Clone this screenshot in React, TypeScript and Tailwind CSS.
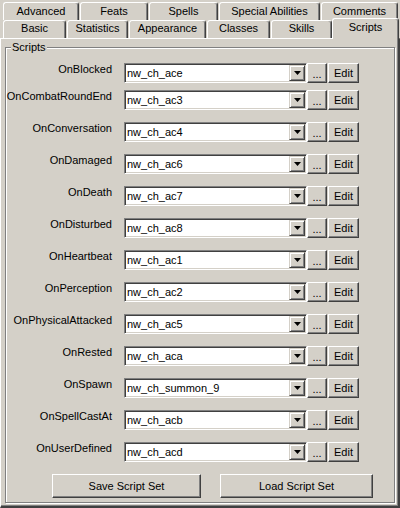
import React from "react";

const tab =
  "flex items-center justify-center border-l border-t border-r border-l-white border-t-white border-r-[#404040] shadow-[inset_-1px_0_0_#808080] rounded-t-[3px] text-[11px] text-black bg-[#d4d0c8] whitespace-nowrap";

const rows = [
  ["OnBlocked", "nw_ch_ace"],
  ["OnCombatRoundEnd", "nw_ch_ac3"],
  ["OnConversation", "nw_ch_ac4"],
  ["OnDamaged", "nw_ch_ac6"],
  ["OnDeath", "nw_ch_ac7"],
  ["OnDisturbed", "nw_ch_ac8"],
  ["OnHeartbeat", "nw_ch_ac1"],
  ["OnPerception", "nw_ch_ac2"],
  ["OnPhysicalAttacked", "nw_ch_ac5"],
  ["OnRested", "nw_ch_aca"],
  ["OnSpawn", "nw_ch_summon_9"],
  ["OnSpellCastAt", "nw_ch_acb"],
  ["OnUserDefined", "nw_ch_acd"],
];

const raised =
  "border border-t-white border-l-white border-b-[#404040] border-r-[#404040] shadow-[inset_-1px_-1px_0_#808080] bg-[#d4d0c8] flex items-center justify-center text-[11px] text-black";

function Row({ label, value, idx }: { label: string; value: string; idx: number }) {
  const mt = idx === 0 ? "mt-0" : idx === 1 ? "mt-[7px]" : "mt-[12px]";
  return (
    <div className={`flex items-start h-[20px] ${mt}`}>
      <div className="w-[106px] flex justify-end whitespace-nowrap text-[11px] leading-[13px] text-black">
        <span className="shrink-0">{label}</span>
      </div>
      <div className="ml-[12px] flex h-[20px] w-[183px] border border-t-[#808080] border-l-[#808080] border-b-white border-r-white shadow-[inset_1px_1px_0_#404040,inset_-1px_-1px_0_#d4d0c8] bg-white p-[1px]">
        <div className="flex-1 flex items-center pl-[1px] text-[11px] text-black whitespace-nowrap">
          {value}
        </div>
        <div className="w-[16px] h-[16px] bg-[#d4d0c8] border border-t-[#d4d0c8] border-l-[#d4d0c8] border-b-[#404040] border-r-[#404040] shadow-[inset_1px_1px_0_white,inset_-1px_-1px_0_#808080] flex items-center justify-center">
          <svg width="7" height="4" viewBox="0 0 7 4">
            <path d="M0 0H7L3.5 4Z" fill="black" />
          </svg>
        </div>
      </div>
      <div className={`${raised} w-[20px] h-[20px] pt-[2px]`}>...</div>
      <div className={`${raised} ml-[1px] w-[31px] h-[20px]`}>Edit</div>
    </div>
  );
}

export default function App() {
  return (
    <div className="w-[400px] h-[508px] bg-[#d4d0c8] font-['Liberation_Sans',Arial,sans-serif] overflow-hidden">
      <div className="h-[38px] pt-[2px] flex flex-col">
        <div className="flex h-[18px] pl-[3px]">
          <div className={`${tab} w-[76px] pb-[1px]`}>Advanced</div>
          <div className={`${tab} ml-[1px] w-[68px] pb-[1px]`}>Feats</div>
          <div className={`${tab} ml-[1px] w-[69px] pb-[1px]`}>Spells</div>
          <div className={`${tab} ml-[1px] w-[101px] pb-[1px]`}>Special Abilities</div>
          <div className={`${tab} ml-[1px] w-[77px] pb-[1px]`}>Comments</div>
        </div>
        <div className="flex h-[18px] pl-[3px] items-end">
          <div className={`${tab} h-[18px] w-[63px] pb-[2px]`}>Basic</div>
          <div className={`${tab} h-[18px] ml-[1px] w-[61px] pb-[2px]`}>Statistics</div>
          <div className={`${tab} h-[18px] ml-[1px] w-[77px] pb-[2px]`}>Appearance</div>
          <div className={`${tab} h-[18px] ml-[1px] w-[63px] pb-[2px]`}>Classes</div>
          <div className={`${tab} h-[18px] ml-[1px] w-[61px] pb-[2px]`}>Skills</div>
          <div className={`${tab} relative z-10 h-[21px] -mb-[1px] w-[67px] pb-[4px]`}>Scripts</div>
        </div>
      </div>
      <div className="h-[470px] border border-l-white border-t-white border-r-[#404040] border-b-[#404040] border-r-2 border-b-2 shadow-[inset_-1px_-1px_0_#808080] pt-[8px] pl-[4px]">
        <div className="relative w-[390px] h-[456px] border border-[#808080] shadow-[1px_1px_0_white,inset_1px_1px_0_white] pt-[15px]">
          <span className="absolute left-[5px] -top-[7px] px-[1px] bg-[#d4d0c8] text-[11px] leading-[13px] text-black">
            Scripts
          </span>
          {rows.map(([l, v], i) => (
            <Row key={l} label={l} value={v} idx={i} />
          ))}
          <div className="flex mt-[12px] ml-[46px]">
            <div className={`${raised} w-[149px] h-[24px]`}>Save Script Set</div>
            <div className={`${raised} ml-[19px] w-[153px] h-[24px]`}>Load Script Set</div>
          </div>
        </div>
      </div>
    </div>
  );
}
